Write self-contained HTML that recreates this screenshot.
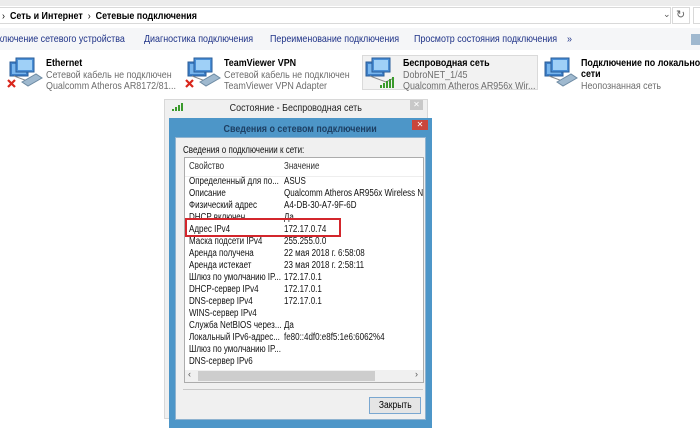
<!DOCTYPE html>
<html><head><meta charset="utf-8"><style>
*{margin:0;padding:0;box-sizing:border-box}
body{width:700px;height:426px;background:#fff;position:relative;overflow:hidden;font-family:"Liberation Sans","Noto Sans CJK SC",sans-serif;color:#000}
.a{position:absolute;white-space:nowrap}
.t{font-size:10.5px;transform:scaleX(0.85);transform-origin:0 0}
.g{color:#6d6d6d}
.r{font-size:10px;color:#111;transform:scaleX(0.8);transform-origin:0 0}
</style></head><body>
<div class="a" style="left:0;top:0;width:700px;height:6px;background:#ececec"></div>
<div class="a" style="left:-2px;top:7px;width:673px;height:17px;border:1px solid #d9d9d9;background:#fff"></div>
<div class="a t" style="left:2px;top:10px">›&nbsp; <b style="font-weight:600">Сеть и Интернет</b> &nbsp;›&nbsp; <b style="font-weight:600">Сетевые подключения</b></div>
<div class="a" style="left:663px;top:9px;font-size:9px;color:#555">⌄</div>
<div class="a" style="left:672px;top:7px;width:18px;height:17px;border:1px solid #d9d9d9"></div>
<div class="a" style="left:676px;top:8px;font-size:11px;color:#666">↻</div>
<div class="a" style="left:693px;top:7px;width:10px;height:17px;border:1px solid #d9d9d9"></div>
<div class="a" style="left:0;top:28px;width:700px;height:22px;background:#f5f6f8"></div>
<div class="a t" style="left:-2px;top:33px;color:#1e3287">ключение сетевого устройства</div>
<div class="a t" style="left:144px;top:33px;color:#1e3287">Диагностика подключения</div>
<div class="a t" style="left:270px;top:33px;color:#1e3287">Переименование подключения</div>
<div class="a t" style="left:414px;top:33px;color:#1e3287">Просмотр состояния подключения</div>
<div class="a t" style="left:567px;top:33px;color:#1e3287">»</div>
<div class="a" style="left:691px;top:34px;width:9px;height:11px;background:#9fb8cf"></div>

<svg class="a" style="left:0;top:0" width="700" height="100">
<defs><g id="pc"><rect x="0" y="4" width="18" height="14" fill="#3d7fc7" stroke="#2a5e99"/><rect x="2" y="6" width="14" height="10" fill="#78b6ee"/><rect x="6" y="0" width="18" height="14" fill="#4a8fd6" stroke="#2a5e99"/><rect x="8" y="2" width="14" height="10" fill="#9fd0f7"/><path d="M4 18 L20 24 L28 20" stroke="#888" fill="none"/></g>
<g id="cab"><path d="M0 10 L14 2 L20 6 L6 14Z" fill="#9fb9cf" stroke="#6d8aa3"/></g></defs>
<g transform="translate(10,58)"><use href="#pc"/><use href="#cab" transform="translate(12,14)"/><path d="M-2 22 l7 7 m0 -7 l-7 7" stroke="#d9261c" stroke-width="2.2"/></g>
<g transform="translate(188,58)"><use href="#pc"/><use href="#cab" transform="translate(12,14)"/><path d="M-2 22 l7 7 m0 -7 l-7 7" stroke="#d9261c" stroke-width="2.2"/></g>
<rect x="362.5" y="55.5" width="175" height="34" fill="#f2f2f2" stroke="#dadada"/>
<g transform="translate(366,58)"><use href="#pc"/><path d="M14 30h2v-3h-2zM17 30h2v-5h-2zM20 30h2v-7h-2zM23 30h2v-9h-2zM26 30h2v-11h-2z" fill="#3a9a2c"/></g>
<g transform="translate(545,58)"><use href="#pc"/><use href="#cab" transform="translate(12,14)"/></g>
</svg>
<div class="a t" style="left:46px;top:57px;font-weight:bold">Ethernet</div>
<div class="a t g" style="left:46px;top:69px">Сетевой кабель не подключен</div>
<div class="a t g" style="left:46px;top:80px">Qualcomm Atheros AR8172/81...</div>
<div class="a t" style="left:224px;top:57px;font-weight:bold">TeamViewer VPN</div>
<div class="a t g" style="left:224px;top:69px">Сетевой кабель не подключен</div>
<div class="a t g" style="left:224px;top:80px">TeamViewer VPN Adapter</div>
<div class="a t" style="left:403px;top:57px;font-weight:bold">Беспроводная сеть</div>
<div class="a t g" style="left:403px;top:69px">DobroNET_1/45</div>
<div class="a t g" style="left:403px;top:80px">Qualcomm Atheros AR956x Wir...</div>
<div class="a t" style="left:581px;top:57px;font-weight:bold">Подключение по локальной</div>
<div class="a t" style="left:581px;top:68px;font-weight:bold">сети</div>
<div class="a t g" style="left:581px;top:80px">Неопознанная сеть</div>

<div class="a" style="left:164px;top:99px;width:264px;height:320px;background:#f0f0f0;border:1px solid #d8d8d8"></div>
<svg class="a" style="left:171px;top:102px" width="14" height="10"><path d="M1 9h2v-2h-2zM4 9h2v-4h-2zM7 9h2v-6h-2zM10 9h2v-8h-2z" fill="#3a9a2c"/></svg>
<div class="a" style="left:164px;top:102px;width:264px;text-align:center;font-size:10.5px;color:#222"><span style="display:inline-block;transform:scaleX(0.85)">Состояние - Беспроводная сеть</span></div>
<div class="a" style="left:410px;top:100px;width:13px;height:10px;background:#c8c8c8;color:#fff;font-size:8px;text-align:center;line-height:10px">✕</div>
<div class="a" style="left:169px;top:118px;width:263px;height:310px;background:#4d96c8"></div>
<div class="a" style="left:169px;top:123px;width:263px;text-align:center;font-size:10.5px;font-weight:bold;color:#1d3f63"><span style="display:inline-block;transform:scaleX(0.85)">Сведения о сетевом подключении</span></div>
<div class="a" style="left:412px;top:120px;width:16px;height:10px;background:#c9463c;color:#fff;font-size:8px;text-align:center;line-height:10px">✕</div>
<div class="a" style="left:175px;top:137px;width:251px;height:283px;background:#f0f0f0;border:1px solid #8fb3d0"></div>
<div class="a r" style="left:183px;top:145px">Сведения о подключении к сети:</div>
<div class="a" style="left:184px;top:157px;width:240px;height:226px;background:#fff;border:1px solid #acacac"></div>
<div class="a" style="left:185px;top:176px;width:238px;height:1px;background:#eee"></div>
<div class="a r" style="left:189px;top:161px;color:#333">Свойство</div>
<div class="a r" style="left:284px;top:161px;color:#333">Значение</div>
<div class="a r" style="left:189px;top:176px;line-height:12px">Определенный для по...<br>Описание<br>Физический адрес<br>DHCP включен<br>Адрес IPv4<br>Маска подсети IPv4<br>Аренда получена<br>Аренда истекает<br>Шлюз по умолчанию IP...<br>DHCP-сервер IPv4<br>DNS-сервер IPv4<br>WINS-сервер IPv4<br>Служба NetBIOS через...<br>Локальный IPv6-адрес...<br>Шлюз по умолчанию IP...<br>DNS-сервер IPv6</div>
<div class="a" style="left:284px;top:176px;width:139px;height:180px;overflow:hidden"><div class="r" style="line-height:12px">ASUS<br>Qualcomm Atheros AR956x Wireless Network<br>A4-DB-30-A7-9F-6D<br>Да<br>172.17.0.74<br>255.255.0.0<br>22 мая 2018 г. 6:58:08<br>23 мая 2018 г. 2:58:11<br>172.17.0.1<br>172.17.0.1<br>172.17.0.1<br><br>Да<br>fe80::4df0:e8f5:1e6:6062%4</div></div>
<div class="a" style="left:185px;top:370px;width:238px;height:12px;background:#f0f0f0"></div>
<div class="a" style="left:198px;top:371px;width:177px;height:10px;background:#cdcdcd"></div>
<div class="a" style="left:188px;top:369px;font-size:9px;color:#555">‹</div>
<div class="a" style="left:415px;top:369px;font-size:9px;color:#555">›</div>
<div class="a" style="left:183px;top:389px;width:240px;height:1px;background:#c8c8c8"></div>
<div class="a" style="left:369px;top:397px;width:52px;height:17px;background:#e5e5e5;border:1px solid #7aa7d0;text-align:center;font-size:10px;line-height:15px"><span style="display:inline-block;transform:scaleX(0.85)">Закрыть</span></div>
<div class="a" style="left:185px;top:218px;width:156px;height:19px;border:2px solid #d3262c"></div>
</body></html>
